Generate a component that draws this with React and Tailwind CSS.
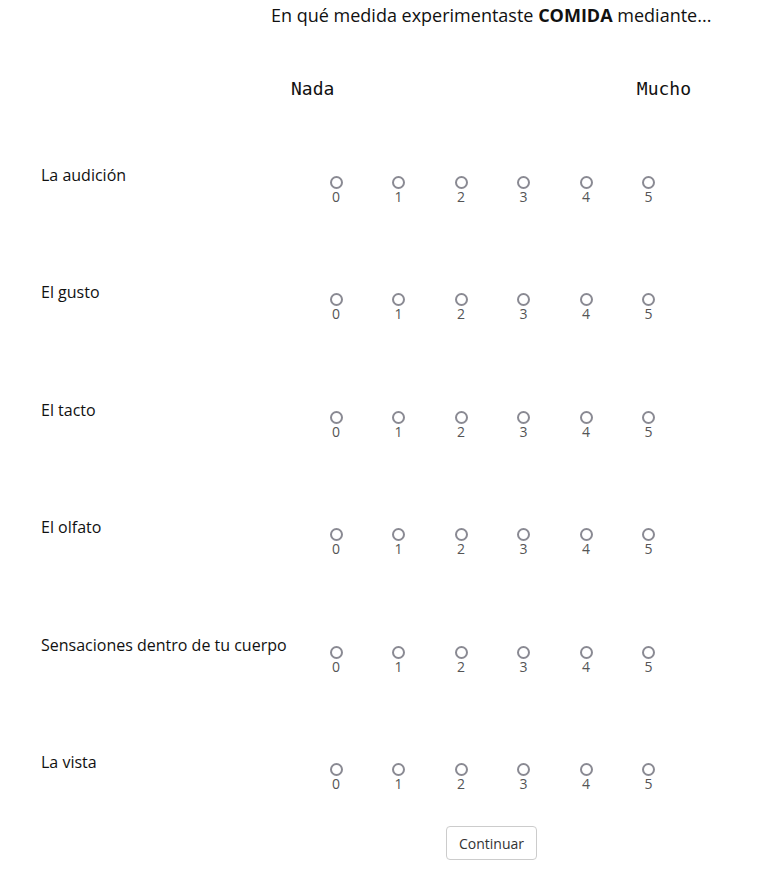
import React from 'react';

const items = ['La audición', 'El gusto', 'El tacto', 'El olfato', 'Sensaciones dentro de tu cuerpo', 'La vista'];
const scale = [0, 1, 2, 3, 4, 5];

const Radio = ({ value }) => (
  <label className="flex w-[62.5px] flex-col items-center">
    <span className="mt-[11px] block h-[13px] w-[13px] rounded-full border-2 border-[#8a8a93] bg-white" />
    <span className="text-[14px] leading-[15px] text-[#555]">{value}</span>
  </label>
);

export default function App() {
  return (
    <div className="min-h-[870px] w-[771px] bg-white text-[#111]" style={{ fontFamily: '"Open Sans", sans-serif' }}>
      {/* Title */}
      <div className="pl-[271px] pt-[3px] text-[18px] leading-[24px]">
        En qué medida experimentaste <b className="font-bold">COMIDA</b> mediante...
      </div>

      {/* Scale ends */}
      <div
        className="mt-[50px] flex w-[691px] justify-between pl-[291px] text-[18px] leading-[24px]"
        style={{ fontFamily: '"DejaVu Sans Mono", monospace' }}
      >
        <span>Nada</span>
        <span>Mucho</span>
      </div>

      {/* Rows */}
      <div className="mt-[64px] pl-[41px]">
        {items.map((item) => (
          <div key={item} className="flex h-[117.4px] items-start">
            <div className="-mt-[1px] w-[263.75px] text-[16px] leading-[22px]">{item}</div>
            <div className="flex">
              {scale.map((v) => (
                <Radio key={v} value={v} />
              ))}
            </div>
          </div>
        ))}
      </div>

      {/* Button */}
      <div className="flex pl-[446px]">
        <button className="-mt-[43px] h-[34px] w-[91px] rounded-[4px] border border-[#ccc] bg-white text-[14px] text-[#333]">
          Continuar
        </button>
      </div>
    </div>
  );
}
